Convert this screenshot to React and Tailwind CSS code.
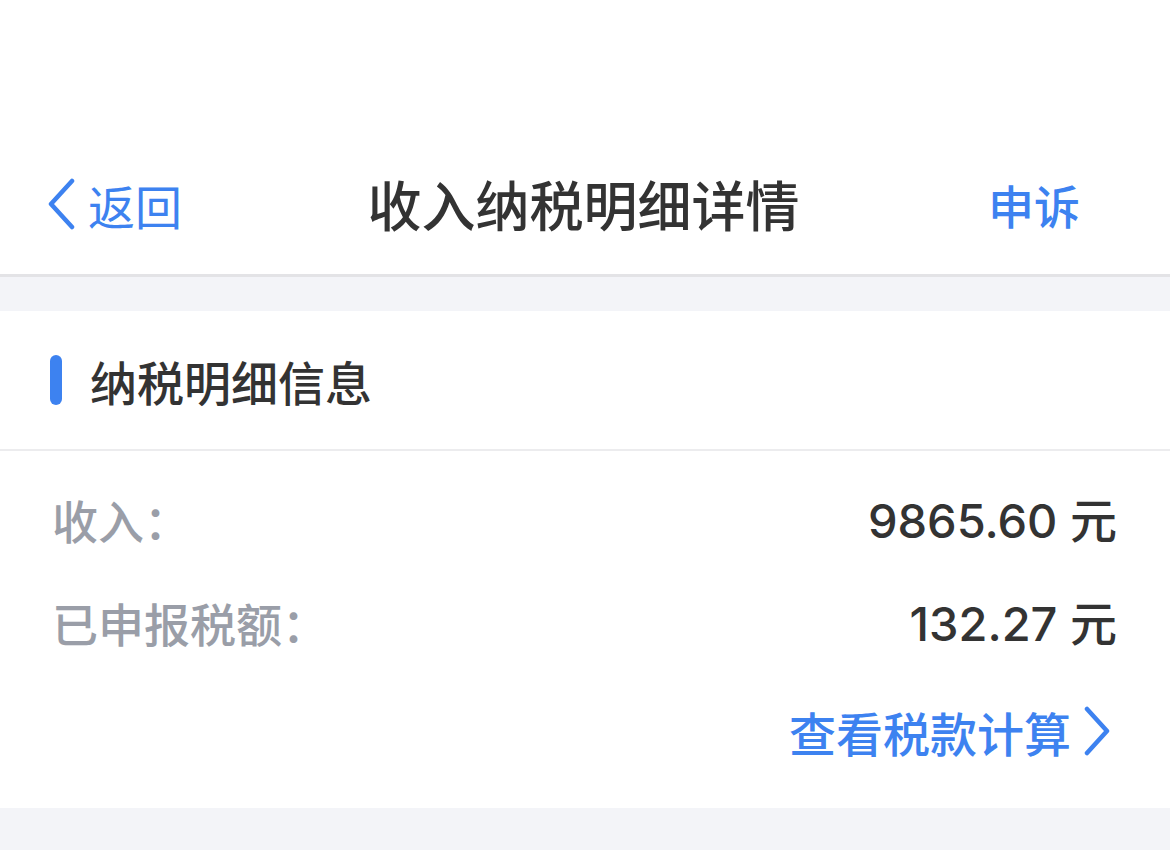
import React from "react";

const cjk = { fontFamily: '"Noto Sans CJK SC", "Noto Sans", sans-serif' };
const num = { fontFamily: 'Inter, "Noto Sans CJK SC", sans-serif' };

export default function App() {
  return (
    <div className="w-[1170px] h-[850px] bg-[#f3f4f8] overflow-hidden" style={cjk}>
      <div className="bg-white h-[277px] flex flex-col justify-end border-b-[3px] border-[#e3e3e6]">
        <div className="h-[140px] flex items-center justify-between pl-[46px] pr-[90px] relative">
          <div className="flex items-center text-[#3d82f0] text-[47px] leading-none">
            <svg width="30" height="52" viewBox="0 0 30 52" className="mr-[12px]">
              <path d="M26 3 L5 26 L26 49" fill="none" stroke="#3d82f0" strokeWidth="4.5" strokeLinecap="round" strokeLinejoin="round" />
            </svg>
            <span>返回</span>
          </div>
          <div className="absolute left-0 right-0 text-center text-[54px] font-medium text-[#333333] leading-none pointer-events-none pr-[3px]">
            收入纳税明细详情
          </div>
          <div className="text-[#3d82f0] text-[46px] font-medium leading-none">申诉</div>
        </div>
      </div>
      <div className="h-[34px]" />
      <div className="bg-white">
        <div className="h-[140px] flex items-center pl-[50px] border-b-2 border-[#ececee]">
          <div className="w-[12px] h-[50px] rounded-full bg-[#3d82f0] mr-[28px]" />
          <div className="text-[47px] font-medium text-[#333333] leading-none">纳税明细信息</div>
        </div>
        <div className="px-[52px] pr-[53px] pt-[28px] pb-[37px]">
          <div className="flex items-center justify-between h-[80px]">
            <div className="text-[46px] font-medium text-[#9a9ea8] leading-none">收入：</div>
            <div className="text-[47px] font-medium text-[#333333] leading-none" style={num}>
              9865.60 <span style={cjk}>元</span>
            </div>
          </div>
          <div className="flex items-center justify-between h-[80px] mt-[23px]">
            <div className="text-[46px] font-medium text-[#9a9ea8] leading-none">已申报税额：</div>
            <div className="text-[47px] font-medium text-[#333333] leading-none" style={num}>
              132.27 <span style={cjk}>元</span>
            </div>
          </div>
          <div className="flex items-center justify-end h-[80px] mt-[29px]">
            <div className="text-[47px] text-[#3d82f0] font-medium leading-none">查看税款计算</div>
            <svg width="28" height="50" viewBox="0 0 28 50" className="ml-[12px] mr-[6px]">
              <path d="M4 3 L24 25 L4 47" fill="none" stroke="#3d82f0" strokeWidth="4.5" strokeLinecap="round" strokeLinejoin="round" />
            </svg>
          </div>
        </div>
      </div>
    </div>
  );
}
